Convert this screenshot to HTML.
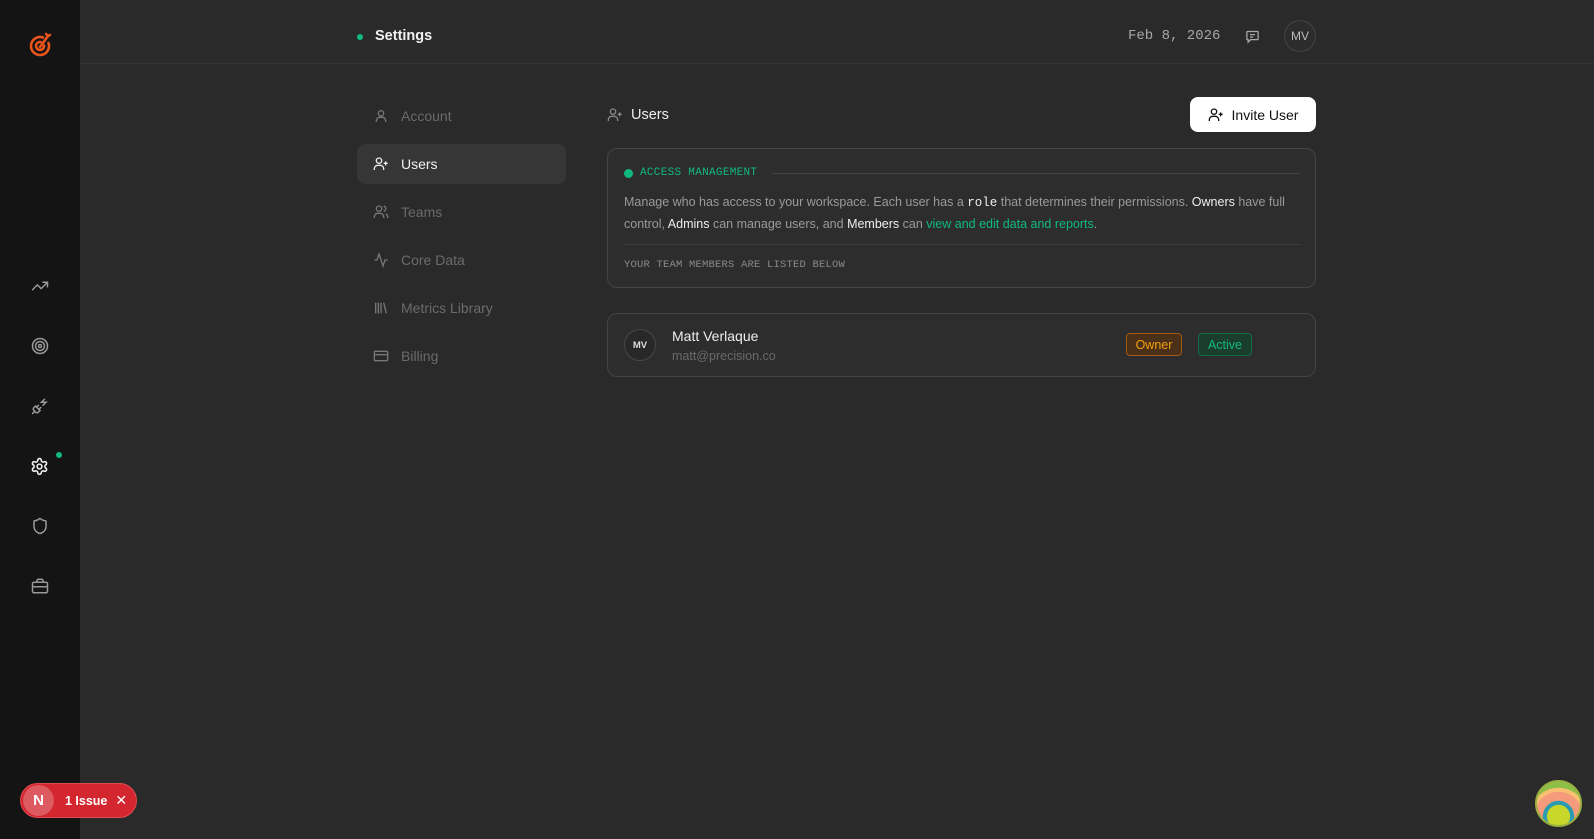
<!DOCTYPE html>
<html><head><meta charset="utf-8"><style>
*{box-sizing:border-box;margin:0;padding:0}
body{width:1594px;height:839px;overflow:hidden;background:#2a2a2a;font-family:"Liberation Sans",sans-serif;color:#e8e8e8;position:relative}
.side{position:absolute;left:0;top:0;width:80px;height:839px;background:#141414}
.ab{position:absolute}
.mono{font-family:"Liberation Mono",monospace}
svg{display:block}
.nav{position:absolute;left:357px;width:209px;height:40px;border-radius:8px;display:flex;align-items:center;padding-left:16px;font-size:14px;color:#6b6b6b}
.nav svg{margin-right:12px}
.nav.act{background:#363636;color:#f0f0f0}
.card{position:absolute;left:607px;width:709px;border:1px solid #444;border-radius:10px;background:#2d2d2d}
</style></head><body>
<div class="side"></div>
<div class="ab" style="left:80px;top:63px;width:1514px;height:1px;background:#353535"></div>
<svg class="ab" style="left:27px;top:31px" width="26" height="28" viewBox="0 0 26 28" fill="none" stroke="#e8541c" stroke-width="2.6" stroke-linecap="round"><path d="M16 6.5A9 9 0 1 0 21.5 12"/><path d="M13.5 11A4 4 0 1 0 17 14.5"/><path d="M13 16L21 5"/><path d="M19 3l2 2 2-1"/></svg>
<svg class="ab" style="left:31px;top:277px" width="18" height="18" viewBox="0 0 24 24" fill="none" stroke="#9a9a9a" stroke-width="2" stroke-linecap="round" stroke-linejoin="round"><path d="M22 7l-8.5 8.5-5-5L2 17"/><path d="M16 7h6v6"/></svg>
<svg class="ab" style="left:31px;top:337px" width="18" height="18" viewBox="0 0 24 24" fill="none" stroke="#9a9a9a" stroke-width="2"><circle cx="12" cy="12" r="10"/><circle cx="12" cy="12" r="6"/><circle cx="12" cy="12" r="2"/></svg>
<svg class="ab" style="left:31px;top:397px" width="18" height="18" viewBox="0 0 24 24" fill="none" stroke="#9a9a9a" stroke-width="2" stroke-linecap="round"><path d="M6.3 20.3a2.4 2.4 0 0 0 3.4 0L12 18l-6-6-2.3 2.3a2.4 2.4 0 0 0 0 3.4Z"/><path d="M2 22l3-3M7.5 13.5L10 11M10.5 16.5L13 14M18 3l-4 4h6l-4 4"/></svg>
<svg class="ab" style="left:30px;top:457px" width="19" height="19" viewBox="0 0 24 24" fill="none" stroke="#f0f0f0" stroke-width="2"><path d="M12.2 2h-.4a2 2 0 0 0-2 2v.2a2 2 0 0 1-1 1.7l-.4.3a2 2 0 0 1-2 0l-.2-.1a2 2 0 0 0-2.7.7l-.2.4a2 2 0 0 0 .7 2.7l.2.1a2 2 0 0 1 1 1.7v.5a2 2 0 0 1-1 1.700l-.2.1a2 2 0 0 0-.7 2.7l.2.4a2 2 0 0 0 2.7.7l.2-.1a2 2 0 0 1 2 0l.4.3a2 2 0 0 1 1 1.7v.2a2 2 0 0 0 2 2h.4a2 2 0 0 0 2-2v-.2a2 2 0 0 1 1-1.7l.4-.3a2 2 0 0 1 2 0l.2.1a2 2 0 0 0 2.7-.7l.2-.4a2 2 0 0 0-.7-2.7l-.2-.1a2 2 0 0 1-1-1.7v-.5a2 2 0 0 1 1-1.7l.2-.1a2 2 0 0 0 .7-2.7l-.2-.4a2 2 0 0 0-2.7-.7l-.2.1a2 2 0 0 1-2 0l-.4-.3a2 2 0 0 1-1-1.7V4a2 2 0 0 0-2-2z"/><circle cx="12" cy="12" r="3"/></svg>
<div class="ab" style="left:56px;top:452px;width:6px;height:6px;border-radius:50%;background:#10b981"></div>
<svg class="ab" style="left:31px;top:517px" width="18" height="18" viewBox="0 0 24 24" fill="none" stroke="#9a9a9a" stroke-width="2"><path d="M20 13c0 5-3.5 7.5-7.7 9a1 1 0 0 1-.7 0C7.5 20.5 4 18 4 13V6a1 1 0 0 1 1-1c2 0 4.5-1.2 6.2-2.7a1.2 1.2 0 0 1 1.5 0C14.5 3.8 17 5 19 5a1 1 0 0 1 1 1z"/></svg>
<svg class="ab" style="left:31px;top:577px" width="18" height="18" viewBox="0 0 24 24" fill="none" stroke="#9a9a9a" stroke-width="2"><rect x="2" y="7" width="20" height="14" rx="2"/><path d="M16 7V5a2 2 0 0 0-2-2h-4a2 2 0 0 0-2 2v2M2 13h20M12 13v1"/></svg>
<div class="ab" style="left:357px;top:34px;width:6px;height:6px;border-radius:50%;background:#10b981"></div>
<div class="ab" style="left:375px;top:28px;font-size:14.5px;font-weight:bold;color:#f2f2f2">Settings</div>
<div class="ab mono" style="left:1128px;top:28px;font-size:14px;color:#a8a8a8">Feb 8, 2026</div>
<svg class="ab" style="left:1245px;top:29px" width="15" height="15" viewBox="0 0 24 24" fill="none" stroke="#aaa" stroke-width="2"><path d="M4 4h16a1 1 0 0 1 1 1v11a1 1 0 0 1-1 1H9l-4 4v-4H4a1 1 0 0 1-1-1V5a1 1 0 0 1 1-1zM8 9h8M8 13h5"/></svg>
<div class="ab" style="left:1284px;top:20px;width:32px;height:32px;border-radius:50%;border:1px solid #444;background:#2c2c2c;font-size:12px;color:#bbb;display:flex;align-items:center;justify-content:center">MV</div>
<div class="nav" style="top:96px"><svg width="16" height="16" viewBox="0 0 24 24" fill="none" stroke="#777" stroke-width="2"><circle cx="12" cy="8" r="4"/><path d="M5 21v-2a5 5 0 0 1 5-5h4a5 5 0 0 1 5 5v2"/></svg>Account</div>
<div class="nav act" style="top:144px"><svg width="16" height="16" viewBox="0 0 24 24" fill="none" stroke="#eee" stroke-width="2"><circle cx="9" cy="7" r="4"/><path d="M2 21v-2a5 5 0 0 1 5-5h4a5 5 0 0 1 5 5v2M19 8v6M16 11h6"/></svg>Users</div>
<div class="nav" style="top:192px"><svg width="16" height="16" viewBox="0 0 24 24" fill="none" stroke="#777" stroke-width="2"><circle cx="9" cy="7" r="4"/><path d="M2 21v-2a5 5 0 0 1 5-5h4a5 5 0 0 1 5 5v2M16 3.1a4 4 0 0 1 0 7.8M22 21v-2a4 4 0 0 0-3-3.9"/></svg>Teams</div>
<div class="nav" style="top:240px"><svg width="16" height="16" viewBox="0 0 24 24" fill="none" stroke="#777" stroke-width="2"><path d="M22 12h-4l-3 9L9 3l-3 9H2"/></svg>Core Data</div>
<div class="nav" style="top:288px"><svg width="16" height="16" viewBox="0 0 24 24" fill="none" stroke="#777" stroke-width="2"><path d="M4 4v16M8 4v16M12 4v16M16 4l4 16"/></svg>Metrics Library</div>
<div class="nav" style="top:336px"><svg width="16" height="16" viewBox="0 0 24 24" fill="none" stroke="#777" stroke-width="2"><rect x="2" y="5" width="20" height="14" rx="2"/><path d="M2 10h20"/></svg>Billing</div>
<svg class="ab" style="left:607px;top:107px" width="16" height="16" viewBox="0 0 24 24" fill="none" stroke="#888" stroke-width="2"><circle cx="9" cy="7" r="4"/><path d="M2 21v-2a5 5 0 0 1 5-5h4a5 5 0 0 1 5 5v2M19 8v6M16 11h6"/></svg>
<div class="ab" style="left:631px;top:107px;font-size:14.5px;color:#eee">Users</div>
<div class="ab" style="left:1190px;top:97px;width:126px;height:35px;border-radius:8px;background:#fff;color:#111;font-size:14px;display:flex;align-items:center;justify-content:center;gap:8px"><svg width="16" height="16" viewBox="0 0 24 24" fill="none" stroke="#111" stroke-width="2"><circle cx="9" cy="7" r="4"/><path d="M2 21v-2a5 5 0 0 1 5-5h4a5 5 0 0 1 5 5v2M19 8v6M16 11h6"/></svg>Invite User</div>
<div class="card" style="top:148px;height:140px">
  <div class="ab" style="left:16px;top:20px;width:9px;height:9px;border-radius:50%;background:#10b981"></div>
  <div class="ab mono" style="left:32px;top:18px;font-size:11px;letter-spacing:.3px;color:#10b981">ACCESS MANAGEMENT</div>
  <div class="ab" style="left:164px;top:24px;width:528px;height:1px;background:#444"></div>
  <div class="ab" style="left:16px;top:43px;width:680px;font-size:12.5px;line-height:21px;color:#9a9a9a">Manage who has access to your workspace. Each user has a <span class="mono" style="color:#eee">role</span> that determines their permissions. <span style="color:#eee">Owners</span> have full control, <span style="color:#eee">Admins</span> can manage users, and <span style="color:#eee">Members</span> can <span style="color:#10b981">view and edit data and reports</span>.</div>
  <div class="ab" style="left:16px;top:95px;width:676px;height:1px;background:#3d3d3d"></div>
  <div class="ab mono" style="left:16px;top:110px;font-size:10.5px;letter-spacing:.2px;color:#8a8a8a">YOUR TEAM MEMBERS ARE LISTED BELOW</div>
</div>
<div class="card" style="top:313px;height:64px">
  <div class="ab" style="left:16px;top:15px;width:32px;height:32px;border-radius:50%;border:1px solid #484848;background:#282828;font-size:9.5px;font-weight:bold;color:#ddd;display:flex;align-items:center;justify-content:center">MV</div>
  <div class="ab" style="left:64px;top:14px;font-size:14px;color:#eee">Matt Verlaque</div>
  <div class="ab" style="left:64px;top:35px;font-size:12.5px;color:#6a6a6a">matt@precision.co</div>
  <div class="ab" style="left:518px;top:19px;width:56px;height:23px;border-radius:4px;border:1px solid #a35a12;background:#4a3018;color:#f59e0b;font-size:12.5px;display:flex;align-items:center;justify-content:center">Owner</div>
  <div class="ab" style="left:590px;top:19px;width:54px;height:23px;border-radius:4px;border:1px solid #136b48;background:#1b3d2e;color:#10b981;font-size:12.5px;display:flex;align-items:center;justify-content:center">Active</div>
</div>
<div class="ab" style="left:20px;top:783px;width:117px;height:35px;border-radius:18px;background:#d3262f;border:1px solid #e04a52;display:flex;align-items:center">
  <div style="width:31px;height:31px;border-radius:50%;background:#dd5a60;margin-left:2px;color:#fff;font-size:15px;font-weight:bold;display:flex;align-items:center;justify-content:center">N</div>
  <div style="margin-left:11px;font-size:12.5px;font-weight:bold;color:#fff">1 Issue</div>
  <div style="margin-left:8px;color:#fff;font-size:14px">✕</div>
</div>
<div class="ab" style="left:1535px;top:780px;width:47px;height:47px;border-radius:50%;background:radial-gradient(circle at 50% 80%,#c8d82a 0 28%,#2a9bb0 29% 38%,#f59a7a 39% 60%,#f8c070 61% 70%,#8cc048 71%);border:2px solid #9ab040"></div>
</body></html>
